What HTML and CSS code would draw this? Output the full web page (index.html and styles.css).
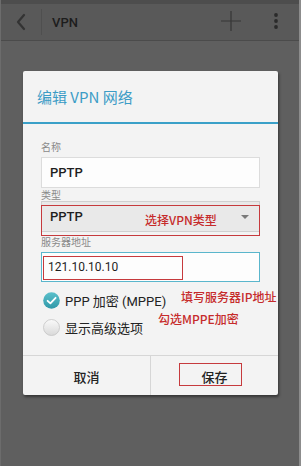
FILE: index.html
```html
<!DOCTYPE html>
<html lang="zh">
<head>
<meta charset="utf-8">
<title>VPN</title>
<link rel="stylesheet" href="styles.css">
</head>
<body>
<div class="screen">
  <div class="statusbar"></div>
  <div class="actionbar">
    <div class="back">
      <svg width="12" height="18" viewBox="0 0 12 18"><path d="M9 2 L3 9 L9 16" fill="none" stroke="#333" stroke-width="2.2" stroke-linecap="round" stroke-linejoin="round"/></svg>
    </div>
    <div class="vdiv"></div>
    <div class="ab-title">VPN</div>
    <div class="ab-plus">
      <svg width="20" height="20" viewBox="0 0 20 20"><path d="M10 0 V20 M0 10 H20" stroke="#363636" stroke-width="1.2"/></svg>
    </div>
    <div class="ab-more">
      <svg width="6" height="18" viewBox="0 0 6 18"><circle cx="3" cy="3" r="1.9" fill="#2a2a2a"/><circle cx="3" cy="9" r="1.9" fill="#2a2a2a"/><circle cx="3" cy="15" r="1.9" fill="#2a2a2a"/></svg>
    </div>
  </div>

  <div class="dialog">
    <div class="dlg-title">编辑 VPN 网络</div>
    <div class="dlg-body">
      <div class="label">名称</div>
      <div class="field"><span class="val">PPTP</span></div>
      <div class="label">类型</div>
      <div class="field select"><span class="val">PPTP</span><span class="tri"></span></div>
      <div class="label">服务器地址</div>
      <div class="field focused"><span class="val ip">121.10.10.10</span></div>
      <div class="opt">
        <span class="check">
          <svg width="17" height="17" viewBox="0 0 17 17"><defs><linearGradient id="g1" x1="0" y1="0" x2="0" y2="1"><stop offset="0" stop-color="#5cc0cb"/><stop offset="1" stop-color="#2f98a8"/></linearGradient></defs><circle cx="8.5" cy="8.5" r="8.3" fill="url(#g1)"/><path d="M4.6 8.8 L7.4 11.4 L12.6 5.8" fill="none" stroke="#fff" stroke-width="1.8" stroke-linecap="round" stroke-linejoin="round"/></svg>
        </span>
        <span class="opt-text">PPP 加密 (MPPE)</span>
      </div>
      <div class="opt">
        <span class="check">
          <svg width="17" height="17" viewBox="0 0 17 17"><defs><linearGradient id="g2" x1="0" y1="0" x2="0" y2="1"><stop offset="0" stop-color="#fafafa"/><stop offset="1" stop-color="#d9d9d9"/></linearGradient></defs><circle cx="8.5" cy="8.5" r="8" fill="url(#g2)" stroke="#c4c4c4" stroke-width="0.8"/></svg>
        </span>
        <span class="opt-text">显示高级选项</span>
      </div>
    </div>
    <div class="dlg-foot">
      <div class="btn">取消</div>
      <div class="btn btn-right">保存</div>
    </div>

    <span class="mark mark-type"></span>
    <span class="note note-type">选择VPN类型</span>
    <span class="mark mark-ip"></span>
    <span class="note note-ip">填写服务器IP地址</span>
    <span class="note note-mppe">勾选MPPE加密</span>
    <span class="mark mark-save"></span>
  </div>
</div>
</body>
</html>
```

FILE: styles.css
```css
html, body {
  margin: 0;
  padding: 0;
}
body {
  background: #5f5f5f;
  font-family: Roboto, "Noto Sans CJK SC", sans-serif;
}
.screen {
  width: 301px;
  height: 466px;
  box-sizing: border-box;
  background: #5f5f5f;
  border-left: 1px solid #6c6c6c;
  border-right: 2px solid #8c8c8c;
  overflow: hidden;
}
.statusbar {
  height: 4px;
  background: #4d4d4d;
}
.actionbar {
  height: 36px;
  background: #595959;
  border-bottom: 1px solid #4b4b4b;
  display: flex;
  align-items: center;
}
.back {
  width: 41px;
  display: flex;
  justify-content: center;
  align-items: center;
  margin-left: -1px;
}
.vdiv {
  width: 1px;
  height: 26px;
  background: #4f4f4f;
}
.ab-title {
  margin-left: 10px;
  font-size: 13px;
  font-weight: 500;
  color: #1d1d1d;
}
.ab-plus {
  margin-left: auto;
  width: 20px;
  height: 20px;
  margin-top: -3px;
}
.ab-plus svg, .ab-more svg { display: block; }
.ab-more {
  margin-left: 32px;
  margin-right: 20px;
  margin-top: -3px;
}

.dialog {
  position: relative;
  width: 255px;
  margin: 30px 0 0 22px;
  background: #f3f3f3;
  border-radius: 2px;
  box-shadow: 1px 2px 3px rgba(0, 0, 0, 0.45);
}
.dlg-title {
  height: 51px;
  display: flex;
  align-items: center;
  padding-left: 14px;
  font-family: "Noto Sans CJK SC", Roboto, sans-serif;
  font-size: 15px;
  color: #3c9cc6;
  border-bottom: 2px solid #3aa0c8;
}
.dlg-body {
  padding: 0 18px 17px 18px;
  display: flex;
  flex-direction: column;
}
.label {
  font-family: "Noto Sans CJK SC", sans-serif;
  font-size: 10px;
  line-height: 12px;
  height: 12px;
  color: #8a8a8a;
  margin-top: 4px;
}
.label:first-child {
  margin-top: 17px;
}
.field {
  height: 31px;
  box-sizing: border-box;
  background: #fdfdfd;
  border: 1px solid #dcdcdc;
  display: flex;
  align-items: center;
  padding-left: 8px;
  margin-top: 4px;
}
.field.select {
  margin-top: 0;
  background: #e9e9e9;
  border-color: #d0d0d0;
  padding-right: 8px;
}
.field.focused {
  height: 30px;
  border: 1px solid #5ab6cc;
  padding-left: 6px;
  margin-top: 4px;
}
.label:nth-of-type(3) { margin-top: 1px; }
.val {
  font-size: 13px;
  font-weight: 500;
  color: #1f1f1f;
}
.val.ip {
  font-size: 12px;
  font-weight: 400;
}
.tri {
  margin-left: auto;
  width: 0;
  height: 0;
  border-left: 4px solid transparent;
  border-right: 4px solid transparent;
  border-top: 4px solid #7a7a7a;
  margin-right: 2px;
}
.opt {
  height: 22px;
  display: flex;
  align-items: center;
  margin-top: 5px;
}
.field.focused + .opt { margin-top: 7px; }
.check {
  width: 17px;
  height: 17px;
  margin-left: 2px;
}
.check svg { display: block; }
.opt-text {
  margin-left: 5px;
  font-family: Roboto, "Noto Sans CJK SC", sans-serif;
  font-size: 13px;
  color: #222;
}
.dlg-foot {
  height: 39px;
  border-top: 1px solid #d6d6d6;
  display: flex;
}
.btn {
  flex: 1;
  display: flex;
  align-items: center;
  justify-content: center;
  font-family: "Noto Sans CJK SC", sans-serif;
  font-size: 13px;
  font-weight: 500;
  color: #222;
  padding-top: 2px;
}
.btn-right {
  border-left: 1px solid #d6d6d6;
}

.note {
  position: absolute;
  font-family: "Noto Sans CJK SC", sans-serif;
  font-size: 12px;
  line-height: 14px;
  font-weight: 500;
  color: #c62b2b;
  white-space: nowrap;
}
.note-type { left: 122px; top: 142px; }
.note-ip { left: 158px; top: 219px; }
.note-mppe { left: 135px; top: 241px; }
.mark {
  position: absolute;
  box-sizing: border-box;
  border: 1px solid #c63a3d;
}
.mark-type {
  left: 18px;
  top: 134px;
  width: 219px;
  height: 31px;
}
.mark-ip {
  left: 20px;
  top: 185px;
  width: 140px;
  height: 24px;
}
.mark-save {
  left: 156px;
  top: 292px;
  width: 63px;
  height: 23px;
}
```
